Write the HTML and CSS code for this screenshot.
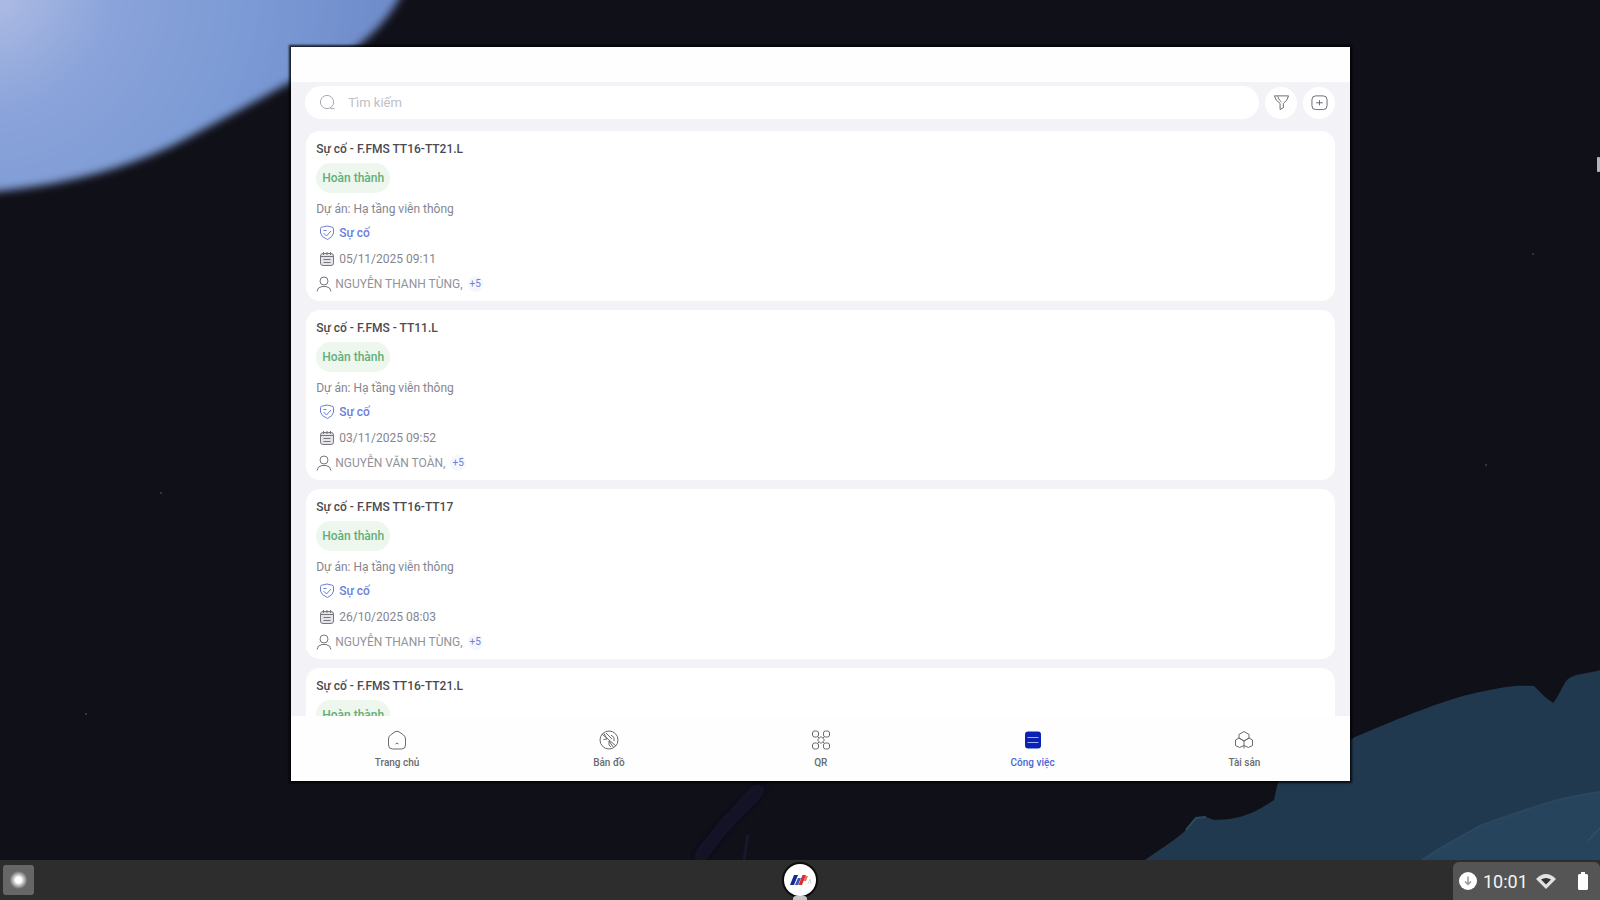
FILE: index.html
```html
<!DOCTYPE html>
<html lang="vi">
  <head>
    <meta charset="UTF-8" />
    <title>Công việc</title>
    <link rel="stylesheet" href="styles.css">
  </head>
  <body>
    <svg class="wallpaper" viewBox="0 0 1600 900" preserveAspectRatio="xMidYMid slice" aria-hidden="true">
      <defs>
        <radialGradient id="planet" gradientUnits="userSpaceOnUse" cx="-20" cy="-20" r="440">
          <stop offset="0" stop-color="#b4c0e6" />
          <stop offset="0.3" stop-color="#8ba4da" />
          <stop offset="0.65" stop-color="#7a99d4" />
          <stop offset="1" stop-color="#6c88c8" />
        </radialGradient>
        <filter id="soft"><feGaussianBlur stdDeviation="4" /></filter>
        <filter id="haze" x="-100%" y="-50%" width="300%" height="200%"><feGaussianBlur stdDeviation="5" /></filter>
      </defs>
      <rect width="1600" height="900" fill="#101018" />
      <path d="M-20 -20H408C396 10 380 28 357 47C335 66 311 72 287 84C240 110 205 129 172 146C115 172 60 186 -20 193Z" fill="url(#planet)" filter="url(#soft)" />
      <path d="M762 787C735 812 715 835 698 860" stroke="#181832" stroke-width="8" fill="none" filter="url(#haze)" />
      <path d="M748 835L744 860" stroke="#181730" stroke-width="3" fill="none" />
      <path d="M1145 860C1165 846 1178 838 1186 830L1196 818L1206 817L1214 820C1240 820 1255 813 1274 800L1278 782L1355 737C1400 718 1450 697 1485 691C1505 686 1520 685 1534 686L1545 697L1553 703C1559 697 1562 685 1568 679C1578 672 1590 674 1600 670V860Z" fill="#21394f" />
      <path d="M1422 860C1445 845 1465 834 1482 825C1530 808 1560 797 1600 792V860Z" fill="#26445c" />
      <path d="M1422 860C1445 845 1465 834 1482 825C1530 808 1560 797 1600 792" fill="none" stroke="#2a485f" stroke-width="2" />
      <path d="M1588 841L1600 828" stroke="#2e4e65" stroke-width="2" />
      <path d="M1186 830L1196 818L1206 817" fill="none" stroke="#2b4a5e" stroke-width="2" />
      <g fill="#3c4250">
        <circle cx="161" cy="493" r="1" /><circle cx="86" cy="714" r="1" /><circle cx="1533" cy="254" r="1" /><circle cx="1486" cy="465" r="1" />
      </g>
      <rect x="1597" y="157" width="3" height="15" rx="1" fill="#b5b5b8" />
    </svg>

    <!-- icons used more than once -->
    <svg class="sprite" aria-hidden="true">
      <symbol id="i-tag" viewBox="0 0 16 16"><path d="M1.500 3.500Q1.500 2 3.500 2L8 1L12.500 2Q14.500 2 14.500 4V8Q14 12 8.500 14.500Q2 12 1.500 8ZM4.500 5.500H7.500M4.500 8L7.500 11L12 6" /></symbol>
      <symbol id="i-date" viewBox="0 0 16 16"><rect x="1.500" y="2.500" width="13" height="12" rx="2.500" fill="#e4e4e9" /><path d="M4.500 1V4M8 1V4M11.500 1V4M2 5.500H14M4.500 8.500H11.500M4.500 11.500H11.500" /></symbol>
      <symbol id="i-user" viewBox="0 0 16 16"><circle cx="8" cy="5" r="4" /><path d="M1 15.500Q1.500 11 6 10.500H10Q14.500 11 15 15.500" /></symbol>
    </svg>

    <main class="desktop">
      <section class="window">
        <div class="title-bar"></div>
        <div class="toolbar">
          <label class="search">
            <svg viewBox="0 0 18 18"><circle cx="8.500" cy="8.500" r="7" /><path d="M12 15.500H16.500" /></svg>
            <input type="search" placeholder="Tìm kiếm" aria-label="Tìm kiếm" />
          </label>
          <button class="round-btn" aria-label="Lọc">
            <svg viewBox="0 0 18 18"><path d="M1.500 2H16.500L14.500 6.500L11 10V14.500L7.500 16.500V10L3.500 6.500ZM5 2.500L6.500 6L9 8.500" /></svg>
          </button>
          <button class="round-btn" aria-label="Thêm">
            <svg viewBox="0 0 18 18"><rect x="1" y="2" width="16" height="14.500" rx="4" /><path d="M5.500 9.300H12.500M9 6.500V12" /></svg>
          </button>
        </div>

        <div class="task-list">
          <article class="task">
            <h2>Sự cố - F.FMS TT16-TT21.L</h2>
            <span class="status">Hoàn thành</span>
            <p class="project">Dự án: Hạ tầng viễn thông</p>
            <a class="type" href="#"><svg><use href="#i-tag" /></svg>Sự cố</a>
            <p class="date"><svg><use href="#i-date" /></svg>05/11/2025 09:11</p>
            <p class="user"><svg><use href="#i-user" /></svg>NGUYỄN THANH TÙNG, <span class="more">+5</span></p>
          </article>
          <article class="task">
            <h2>Sự cố - F.FMS - TT11.L</h2>
            <span class="status">Hoàn thành</span>
            <p class="project">Dự án: Hạ tầng viễn thông</p>
            <a class="type" href="#"><svg><use href="#i-tag" /></svg>Sự cố</a>
            <p class="date"><svg><use href="#i-date" /></svg>03/11/2025 09:52</p>
            <p class="user"><svg><use href="#i-user" /></svg>NGUYỄN VĂN TOÀN, <span class="more">+5</span></p>
          </article>
          <article class="task">
            <h2>Sự cố - F.FMS TT16-TT17</h2>
            <span class="status">Hoàn thành</span>
            <p class="project">Dự án: Hạ tầng viễn thông</p>
            <a class="type" href="#"><svg><use href="#i-tag" /></svg>Sự cố</a>
            <p class="date"><svg><use href="#i-date" /></svg>26/10/2025 08:03</p>
            <p class="user"><svg><use href="#i-user" /></svg>NGUYỄN THANH TÙNG, <span class="more">+5</span></p>
          </article>
          <article class="task">
            <h2>Sự cố - F.FMS TT16-TT21.L</h2>
            <span class="status">Hoàn thành</span>
          </article>
        </div>

        <nav class="tabs">
          <a href="#">
            <svg viewBox="0 0 20 20"><path d="M1.500 9Q1.500 6.500 3.500 5L8 1.800Q10 .8 12 1.800L16.500 5Q18.500 6.500 18.500 9V15Q18.500 19 14.500 19H5.500Q1.500 19 1.500 15ZM8.500 14Q10 12 11.500 14" /></svg>
            Trang chủ
          </a>
          <a href="#">
            <svg viewBox="0 0 20 20"><circle cx="10" cy="10" r="9" /><path d="M3 4L17 16M5 3.500L8 9L4.500 9.500M7 3L13 9M10 11L14.500 17.500M12 5L15 7.500V11M10 11V15L12 17" /></svg>
            Bản đồ
          </a>
          <a href="#">
            <svg viewBox="0 0 20 20"><rect x="1.500" y="1" width="6" height="6" rx="2" /><rect x="12.500" y="1" width="6" height="6" rx="2" /><rect x="1.500" y="13" width="6" height="6" rx="2" /><rect x="12.500" y="13" width="6" height="6" rx="2" /><path d="M10 6.500L13.500 10L10 13.500L6.500 10ZM7 7L8 8M13 7L12 8M7 13L8 12M13 13L12 12" /></svg>
            QR
          </a>
          <a class="active" href="#">
            <svg viewBox="0 0 20 20"><rect x="2" y="1.500" width="16" height="17" rx="3" fill="#0b20b4" stroke="none" /><path d="M4.500 7.500H15.500M4.500 12.500H15.500" stroke="#9cb6f0" /></svg>
            Công việc
          </a>
          <a href="#">
            <svg viewBox="0 0 20 20"><path d="M5 8V4.500L10 1.500L15 4.500V8L10 11ZM5 8L1.500 10V15.500L5.500 17.500L10 15.500L14.500 17.500L18.500 15.500V10L15 8M5 8L10 11L15 8M10 11V18.500" /></svg>
            Tài sản
          </a>
        </nav>
      </section>
    </main>

    <footer class="shelf">
      <button class="launcher" aria-label="Trình chạy"></button>
      <button class="app" aria-label="Ứng dụng">
        <svg viewBox="0 0 32 32">
          <path d="M6 21L10 11H14L10 21Z" fill="#152b8e" /><path d="M11 21L14 14H17L14 21Z" fill="#3559bd" />
          <path d="M14.500 21L18.500 11H22L18 21Z" fill="#dd2a30" /><path d="M19.500 17L21.500 12H24L22 17Z" fill="#ec6c6c" />
          <path d="M24 20L26 15L27 20" fill="none" stroke="#d5d5d8" />
        </svg>
      </button>
      <button class="tray">
        <svg class="notice" viewBox="0 0 18 18"><circle cx="9" cy="9" r="9" fill="#fff" /><path d="M9 4.500V12M6 9.500L9 12.500L12 9.500" fill="none" stroke="#999" stroke-width="1.500" /></svg>
        <span>10:01</span>
        <svg class="wifi" viewBox="0 0 20 16"><path d="M0 6Q10 -4 20 6L10 16Z" fill="#e2e2e2" /><path d="M5 6.500Q10 3.500 15 6.500L10 11.500Z" fill="#333" /></svg>
        <svg class="battery" viewBox="0 0 10 18"><path d="M3 0H7V2H8.500Q10 2 10 3.500V16.500Q10 18 8.500 18H1.500Q0 18 0 16.500V3.500Q0 2 1.500 2H3Z" fill="#fff" /></svg>
      </button>
    </footer>
  </body>
</html>
```
FILE: styles.css
```css
* {
  box-sizing: border-box;
}

body {
  margin: 0;
  height: 100vh;
  display: flex;
  flex-direction: column;
  overflow: hidden;
  background: #101018;
  font-family: Roboto, "Noto Sans", sans-serif;
  font-size: 12px;
  line-height: 16px;
}

h2,
p {
  margin: 0;
}

a {
  text-decoration: none;
}

button {
  padding: 0;
  border: none;
  cursor: pointer;
  font-family: inherit;
}

svg {
  flex-shrink: 0;
  fill: none;
  stroke: currentColor;
}

.wallpaper {
  position: absolute;
  inset: 0;
  z-index: -1;
  width: 100%;
  height: 100%;
  stroke: none;
}

.sprite {
  display: none;
}

.desktop {
  flex: 1;
  min-height: 0;
  display: flex;
  padding: 47px 0 79px;
}

.window {
  width: 66.2%;
  margin-left: 18.2%;
  display: flex;
  flex-direction: column;
  background: #f3f3f7;
  box-shadow: 0 0 2px 2px rgba(0, 0, 0, 0.8);
}

.title-bar {
  height: 35px;
  flex-shrink: 0;
  background: #fefefe;
}

/* search */
.toolbar {
  display: flex;
  align-items: center;
  gap: 6px;
  padding: 4px 15px 12px 14px;
}

.search {
  flex: 1;
  height: 33px;
  display: flex;
  align-items: center;
  gap: 12px;
  padding: 0 14px;
  border-radius: 17px;
  background: #fff;
  color: #a4a4ac;
}

.search svg,
.round-btn svg {
  width: 17px;
  height: 17px;
}

.search input {
  flex: 1;
  padding: 0;
  border: none;
  outline: none;
  background: none;
  font: inherit;
  font-size: 13px;
}

.search input::placeholder {
  color: #c0c0c6;
}

.round-btn {
  width: 32px;
  height: 32px;
  display: flex;
  align-items: center;
  justify-content: center;
  border-radius: 50%;
  background: #fff;
  color: #66666c;
}

/* task cards */
.task-list {
  flex: 1;
  min-height: 0;
  overflow: hidden;
  display: flex;
  flex-direction: column;
  gap: 9px;
  padding: 0 15px;
}

.task {
  flex-shrink: 0;
  display: flex;
  flex-direction: column;
  align-items: flex-start;
  padding: 10px 10px 9px;
  border-radius: 14px;
  background: #fff;
  color: #85858f;
}

.task h2 {
  margin-bottom: 6px;
  font-size: 12px;
  line-height: 16px;
  font-weight: 500;
  color: #4a4a50;
}

.status {
  height: 30px;
  margin-bottom: 8px;
  padding: 0 6px;
  border-radius: 15px;
  background: #edf7ee;
  color: #62ae78;
  font-weight: 500;
  line-height: 30px;
}

.project {
  margin-bottom: 8px;
}

.type,
.date,
.user {
  display: flex;
  align-items: center;
  gap: 4px;
}

.type,
.date {
  padding-left: 3px;
}

.type {
  margin-bottom: 10px;
  color: #6c80da;
  font-weight: 500;
}

.date {
  margin-bottom: 9px;
}

.task svg {
  width: 16px;
  height: 16px;
}

.user {
  gap: 3px;
  color: #92929b;
}

.user svg,
.date svg {
  color: #77777f;
}

.more {
  margin-left: 2px;
  padding: 0 2px;
  border-radius: 8px;
  background: #f5f7fe;
  color: #6c80da;
  font-size: 10px;
}

/* bottom navigation */
.tabs {
  height: 65px;
  flex-shrink: 0;
  display: grid;
  grid-template-columns: repeat(5, 1fr);
  background: #fefefe;
}

.tabs a {
  display: flex;
  flex-direction: column;
  align-items: center;
  gap: 5px;
  padding-top: 14px;
  color: #6a6a6e;
  font-size: 10px;
  font-weight: 500;
}

.tabs svg {
  width: 20px;
  height: 20px;
}

.tabs .active {
  color: #4c64d8;
}

/* shelf */
.shelf {
  height: 40px;
  flex-shrink: 0;
  display: grid;
  grid-template-columns: 1fr auto 1fr;
  align-items: center;
  background: #2d2d2d;
}

.launcher {
  width: 31px;
  height: 30px;
  margin-left: 3px;
  border-radius: 3px;
  background: radial-gradient(circle, #fff 0 3px, #b0b0b0 6px, #666 9px);
}

.app {
  height: 40px;
  display: flex;
  flex-direction: column;
  align-items: center;
  background: none;
}

.app svg {
  width: 32px;
  height: 32px;
  margin-top: 4px;
  border-radius: 50%;
  background: #fff;
  stroke: none;
  box-shadow: 0 0 0 2px #0c0c0c;
}

.app::after {
  content: "";
  width: 14px;
  height: 4px;
  border-radius: 3px 3px 0 0;
  background: #c8c8c8;
}

.tray {
  justify-self: end;
  align-self: end;
  width: 147px;
  height: 38px;
  display: flex;
  align-items: center;
  padding: 0 12px 0 6px;
  border-radius: 6px 6px 0 0;
  background: #555;
  color: #f4f4f4;
  font-size: 18px;
}

.tray svg {
  stroke: none;
}

.notice {
  width: 18px;
  height: 18px;
  margin-right: 6px;
}

.wifi {
  width: 20px;
  height: 16px;
  margin-left: 8px;
}

.battery {
  width: 10px;
  height: 18px;
  margin-left: auto;
}
```
